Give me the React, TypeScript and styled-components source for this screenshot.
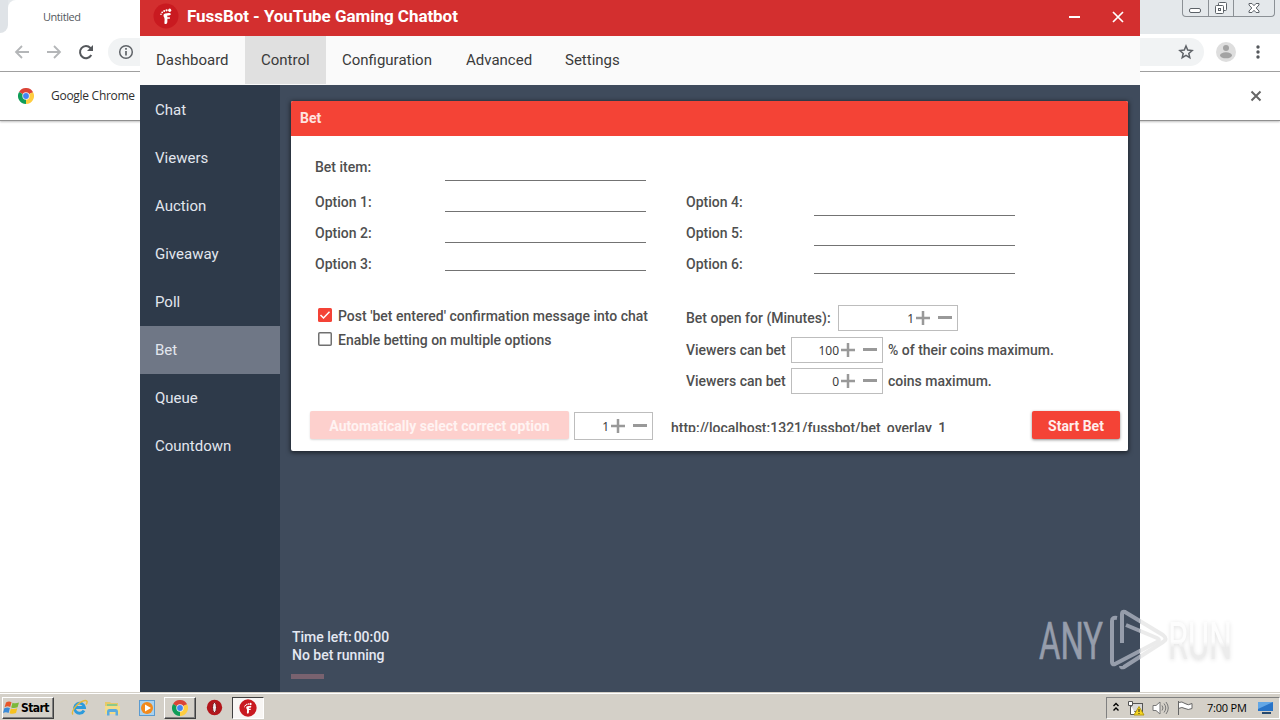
import { ReactNode, useState } from "react"
import styled, { createGlobalStyle, css } from "styled-components"

const GlobalStyle = createGlobalStyle`
  * {
    box-sizing: border-box;
  }
  body {
    margin: 0;
    overflow: hidden;
    background: #fff;
  }
`

const tahoma = `"Open Sans", "Noto Sans", sans-serif`

const Desktop = styled.div`
  position: relative;
  display: flex;
  flex-direction: column;
  width: 1280px;
  height: 720px;
  overflow: hidden;
  font-family: Roboto, sans-serif;
`

/* ---- browser in the background ---- */

const Browser = styled.div`
  flex: 1;
  display: flex;
  flex-direction: column;
  background: #fff;
`

const TabStrip = styled.div`
  height: 34px;
  display: flex;
  justify-content: space-between;
  padding-right: 5px;
  background: #e4e8eb;
`

const StripEdge = styled.div`
  width: 8px;
  background: #fff;
  > div {
    height: 33px;
    background: #dfe3e7;
    border-bottom-right-radius: 8px;
  }
`

const BrowserTab = styled.div`
  flex: 0 0 240px;
  padding: 9px 0 0 35px;
  background: #fff;
  border-top-left-radius: 8px;
  font: 11px/15px ${tahoma};
  letter-spacing: -0.45px;
  color: #55595d;
`

const TabSpacer = styled.div`
  flex: 1;
`

const WindowButtons = styled.div`
  display: flex;
  width: 93px;
  height: 17px;
  border: 1px solid #8b9095;
  border-top: none;
  border-radius: 0 0 4px 4px;
  svg + svg {
    border-left: 1px solid #8b9095;
  }
`

const Toolbar = styled.div`
  height: 38px;
  display: flex;
  align-items: center;
  padding: 0 13px 1px;
  border-bottom: 1px solid #a3a3a3;
`

const NavIcons = styled.div`
  display: flex;
  gap: 14px;
  width: 95px;
`

const AddressBar = styled.div`
  flex: 1;
  display: flex;
  align-items: center;
  justify-content: space-between;
  height: 28px;
  margin-right: 12px;
  padding: 0 9px;
  border-radius: 14px;
  background: #f1f3f4;
`

const BrowserActions = styled.div`
  display: flex;
  align-items: center;
  gap: 13px;
`

const InfoBar = styled.div`
  height: 49px;
  display: flex;
  align-items: center;
  padding: 0 17px 0 18px;
  border-bottom: 1px solid #909090;
  box-shadow: 0 1px 2px rgba(0, 0, 0, 0.25);
  font: 12px/16px ${tahoma};
  letter-spacing: -0.28px;
  color: #303030;
  span {
    flex: 1;
    margin-left: 17px;
  }
`

/* ---- bot window ---- */

const Window = styled.div`
  position: absolute;
  left: 140px;
  top: 0;
  width: 1000px;
  height: 692px;
  display: flex;
  flex-direction: column;
`

const TitleBar = styled.div`
  height: 36px;
  display: flex;
  align-items: center;
  padding: 0 16px 4px 13px;
  background: #d32f2f;
  color: #fff;
`

const Title = styled.div`
  flex: 1;
  margin-left: 8px;
  font-size: 17px;
  font-weight: 700;
  letter-spacing: -0.06px;
`

const MenuBar = styled.div`
  height: 49px;
  display: flex;
  background: #fafafa;
`

const MenuItem = styled.div<{ $active?: boolean; $width: number }>`
  width: ${props => props.$width}px;
  height: 48px;
  line-height: 48px;
  padding-left: 16px;
  font-size: 15px;
  color: #3a3a3a;
  cursor: pointer;
  white-space: nowrap;
  background: ${props => (props.$active ? "#e0e0e0" : "transparent")};
`

const Content = styled.div`
  flex: 1;
  display: flex;
`

const Sidebar = styled.div`
  width: 140px;
  padding-top: 1px;
  background: #2e3a4a;
`

const SideItem = styled.div<{ $active?: boolean }>`
  height: 48px;
  line-height: 48px;
  padding-left: 15px;
  font-size: 15px;
  color: #e2e6ee;
  cursor: pointer;
  background: ${props => (props.$active ? "#6f7786" : "transparent")};
`

const Main = styled.div`
  flex: 1;
  display: flex;
  flex-direction: column;
  justify-content: space-between;
  padding: 16px 12px 13px 11px;
  background: #3f4b5c;
`

const Card = styled.div`
  height: 350px;
  background: #fff;
  border-radius: 2px;
  box-shadow: 0 1px 4px 1px rgba(0, 0, 0, 0.5);
  font-size: 14px;
  font-weight: 500;
  color: #4f4f4f;
`

const CardHeader = styled.div`
  height: 35px;
  line-height: 35px;
  padding-left: 9px;
  border-radius: 2px 2px 0 0;
  background: #f44336;
  font-weight: 700;
  color: #ffe3e0;
`

const Columns = styled.div`
  display: grid;
  grid-template-columns: 371px 1fr;
  padding-left: 24px;
`

const Fields = styled.div`
  height: 144px;
  display: flex;
  flex-direction: column;
  justify-content: flex-end;
`

const FieldRow = styled.label<{ $labelWidth: number; $gap?: number }>`
  display: grid;
  grid-template-columns: ${props => props.$labelWidth}px 201px;
  height: 31px;
  line-height: 31px;
  margin-bottom: ${props => props.$gap || 0}px;
`

const FieldInput = styled.input<{ $height: number }>`
  width: 201px;
  height: ${props => props.$height}px;
  padding: 0;
  border: none;
  border-bottom: 1px solid #737373;
  outline: none;
  background: transparent;
`

const Settings = styled.div<{ $top: number }>`
  height: 114px;
  padding-top: ${props => props.$top}px;
`

const CheckRow = styled.div`
  display: flex;
  gap: 6px;
  height: 24px;
  line-height: 24px;
  padding-left: 3px;
  cursor: pointer;
  svg {
    margin-top: 4px;
  }
`

const SettingRow = styled.div<{ $gap: number }>`
  display: flex;
  height: 26px;
  line-height: 26px;
  margin-bottom: ${props => props.$gap}px;
`

const SettingLabel = styled.div<{ $width: number }>`
  width: ${props => props.$width}px;
  white-space: nowrap;
`

const Suffix = styled.div`
  margin-left: 5px;
`

const SpinnerBox = styled.div<{ $width: number; $height?: number }>`
  display: flex;
  align-items: center;
  justify-content: flex-end;
  width: ${props => props.$width}px;
  height: ${props => props.$height || 26}px;
  padding-right: 4px;
  border: 1px solid #bdbdbd;
  font: 12px/24px "Noto Sans", sans-serif;
  color: #3c3c3c;
  svg {
    cursor: pointer;
  }
  svg + svg {
    margin-left: 6px;
  }
`

const SpinnerValue = styled.span`
  margin: 2px 1px 0 0;
`

const Footer = styled.div`
  display: flex;
  align-items: flex-start;
  padding: 17px 8px 0 19px;
`

const Button = styled.button<{ $width: number }>`
  width: ${props => props.$width}px;
  height: 28px;
  padding: 2px 0 0;
  border: none;
  border-radius: 2px;
  background: #f44336;
  box-shadow: 0 1px 3px rgba(0, 0, 0, 0.45);
  font: 700 14px/26px Roboto, sans-serif;
  color: #ffeeec;
  cursor: pointer;
  ${props => props.disabled && css`
    background: #fdd0cd;
    box-shadow: 0 1px 2px rgba(0, 0, 0, 0.15);
    color: #fff3f2;
  `}
`

const SpinnerSlot = styled.div`
  margin: 1px 18px 0 5px;
`

const OverlayUrl = styled.div`
  flex: 1;
  height: 13px;
  margin-top: 8px;
  line-height: 18px;
  overflow: hidden;
`

const Status = styled.div`
  padding-left: 1px;
  font-size: 14px;
  font-weight: 500;
  line-height: 18px;
  color: #e4e8f2;
`

const TimeLeft = styled.div`
  display: flex;
  gap: 2px;
`

const Progress = styled.div`
  width: 33px;
  height: 5px;
  margin: 10px 0 0 -1px;
  background: #79626f;
`

/* ---- taskbar ---- */

const Taskbar = styled.div`
  height: 28px;
  display: flex;
  align-items: center;
  padding: 2px 0 0;
  border-top: 1px solid #d4d0c8;
  box-shadow: inset 0 1px #fff;
  background: #d4d0c8;
`

const raised = css`
  border: 1px solid;
  border-color: #fff #404040 #404040 #fff;
  box-shadow: inset -1px -1px #808080;
`

const StartButton = styled.div`
  ${raised}
  display: flex;
  align-items: center;
  gap: 1px;
  width: 52px;
  height: 22px;
  margin: 0 9px 0 2px;
  padding-left: 0;
  font: bold 12px/20px "DejaVu Sans Condensed", "DejaVu Sans", sans-serif;
  letter-spacing: -0.6px;
  color: #000;
`

const TaskSlot = styled.div<{ $state?: "open" | "pressed" }>`
  display: flex;
  align-items: center;
  justify-content: center;
  width: 32px;
  height: 22px;
  margin-right: 1.8px;
  ${props => props.$state === "open" && raised}
  ${props => props.$state === "pressed" && css`
    border: 1px solid;
    border-color: #404040 #fff #fff #404040;
    background: #f8f6f4;
  `}
`

const Tray = styled.div`
  display: flex;
  align-items: center;
  width: 174px;
  height: 22px;
  margin-left: auto;
  padding-left: 5px;
  border: 1px solid;
  border-color: #808080 #fff #fff #808080;
  font: 11px/20px ${tahoma};
  color: #000;
  svg {
    flex: none;
  }
`

const TrayIcons = styled.div`
  display: flex;
  align-items: center;
  gap: 7px;
`

const Clock = styled.span`
  width: 50px;
  margin-left: 13px;
  letter-spacing: -0.2px;
  white-space: nowrap;
`

const Watermark = styled.svg`
  position: absolute;
  left: 1030px;
  top: 600px;
  overflow: visible;
  font-family: Roboto, sans-serif;
  font-size: 52px;
`

const WatermarkShade = styled.g`
  filter: drop-shadow(0 1px 2px rgba(0, 0, 0, 0.12));
`

function ChromeLogo({ size }: { size: number }) {
  return (
    <svg width={size} height={size} viewBox="0 0 48 48">
      <path d="M24 24 3.2 12A24 24 0 0 1 44.8 12Z" fill="#db4437" />
      <path d="M24 24 44.8 12A24 24 0 0 1 24 48Z" fill="#ffcd40" />
      <path d="M24 24V48A24 24 0 0 1 3.2 12Z" fill="#0f9d58" />
      <path d="M24 13H44.8V12H24Z" fill="#db4437" />
      <circle cx="24" cy="24" r="11" fill="#f1f1f1" />
      <circle cx="24" cy="24" r="8.7" fill="#4285f4" />
    </svg>
  )
}

function BotLogo({ size }: { size: number }) {
  return (
    <svg width={size} height={size} viewBox="0 0 26 26">
      <circle cx="13" cy="13" r="12.5" fill="#c91a20" />
      <path d="M11.500 20.500c-.3-2 .6-4-.3-6-1.200-1.800-1-3.800 1-4.100 2-.3 5-.9 5.600.3.500 1.300-1 1.700-3.500 1.800v1.700h2.600v1.600h-2.500c-.2 1.600.4 3.500-.6 4.700-.7.700-2.100.8-2.300 0Z" fill="#fff" />
      <ellipse cx="16.700" cy="7.200" rx="1.500" ry="1.800" fill="#fff" />
      <circle cx="13.600" cy="7.300" r="1.100" fill="#fff" />
      <circle cx="11.200" cy="8" r="1" fill="#fff" />
      <circle cx="9.200" cy="9.300" r=".9" fill="#fff" />
      <circle cx="8" cy="11.200" r=".8" fill="#fff" />
    </svg>
  )
}

interface ISpinnerProps {
  initial: number
  width: number
  height?: number
}

function Spinner({ initial, width, height }: ISpinnerProps) {
  const [value, setValue] = useState(initial)

  return (
    <SpinnerBox $width={width} $height={height}>
      <SpinnerValue>{value}</SpinnerValue>
      <svg width="16" height="16" onClick={() => setValue(value + 1)}>
        <path d="M8 1v14M1 8h14" stroke="#999" strokeWidth="2.500" />
      </svg>
      <svg width="16" height="16" onClick={() => setValue(Math.max(0, value - 1))}>
        <path d="M1 7.500h14" stroke="#999" strokeWidth="3" />
      </svg>
    </SpinnerBox>
  )
}

function Check({ initial, children }: { initial: boolean; children: ReactNode }) {
  const [checked, setChecked] = useState(initial)

  return (
    <CheckRow onClick={() => setChecked(!checked)}>
      <svg width="14" height="14">
        {checked ? (
          <>
            <rect width="14" height="14" rx="1.500" fill="#f44336" />
            <path d="M2.500 7 5.500 10 11.500 3.800" fill="none" stroke="#fff" strokeWidth="1.500" />
          </>
        ) : (
          <rect x=".75" y=".75" width="12.500" height="12.500" rx="1" fill="#fff" stroke="#707070" strokeWidth="1.500" />
        )}
      </svg>
      {children}
    </CheckRow>
  )
}

interface IFieldProps {
  label: string
  height: number
  labelWidth?: number
  gap?: number
}

function Field({ label, height, labelWidth = 130, gap }: IFieldProps) {
  return (
    <FieldRow $labelWidth={labelWidth} $gap={gap}>
      {label}
      <FieldInput $height={height} />
    </FieldRow>
  )
}

function BrowserWindow() {
  return (
    <Browser>
      <TabStrip>
        <StripEdge><div /></StripEdge>
        <BrowserTab>Untitled</BrowserTab>
        <TabSpacer />
        <WindowButtons>
          <svg width="25" height="16" fill="none" stroke="#5c6268">
            <rect x="6.500" y="8.500" width="11" height="4" rx="1.500" fill="#fff" />
          </svg>
          <svg width="26" height="16" fill="#fff" stroke="#5c6268">
            <rect x="9.500" y="2.500" width="8" height="8" rx="1" />
            <rect x="6.500" y="5.500" width="8" height="8" rx="1" />
            <rect x="9.500" y="8.500" width="2" height="2" />
          </svg>
          <svg width="41" height="16" fill="#fff" stroke="#5c6268">
            <path d="M15 3.500h3l2 2.200 2-2.200h3v1.500l-2.800 3 2.800 3v1.500h-3l-2-2.200-2 2.200h-3V11l2.800-3-2.800-3Z" />
          </svg>
        </WindowButtons>
      </TabStrip>
      <Toolbar>
        <NavIcons>
          <svg width="18" height="18" fill="none" stroke="#b4b6b8" strokeWidth="1.800">
            <path d="M16 9H3M9 3 3 9l6 6" />
          </svg>
          <svg width="18" height="18" fill="none" stroke="#b4b6b8" strokeWidth="1.800">
            <path d="M2 9h13M9 3l6 6-6 6" />
          </svg>
          <svg width="18" height="18" fill="none" stroke="#55585c" strokeWidth="2">
            <path d="M14.300 12A6 6 0 1 1 13.400 5L15 6.600" />
            <path d="M16 2v6h-6Z" fill="#55585c" stroke="none" />
          </svg>
        </NavIcons>
        <AddressBar>
          <svg width="18" height="18" fill="none" stroke="#5f6368" strokeWidth="1.500">
            <circle cx="9" cy="9" r="6.300" />
            <path d="M9 8v4.500M9 5v1.700" strokeWidth="1.700" />
          </svg>
          <svg width="18" height="18" fill="none" stroke="#5f6368" strokeWidth="1.500">
            <path d="m9 3 1.700 4.100 4.400.4-3.300 2.900 1 4.300L9 12.400l-3.800 2.300 1-4.300L2.900 7.500l4.400-.4Z" />
          </svg>
        </AddressBar>
        <BrowserActions>
          <svg width="20" height="20">
            <circle cx="10" cy="10" r="10" fill="#dedede" />
            <circle cx="10" cy="6" r="3" fill="#a3a3a3" />
            <ellipse cx="10" cy="13.300" rx="6" ry="3" fill="#a3a3a3" />
          </svg>
          <svg width="18" height="18" fill="#55585c">
            <circle cx="9" cy="4" r="1.700" />
            <circle cx="9" cy="9" r="1.700" />
            <circle cx="9" cy="14" r="1.700" />
          </svg>
        </BrowserActions>
      </Toolbar>
      <InfoBar>
        <ChromeLogo size={16} />
        <span>Google Chrome</span>
        <svg width="14" height="14" stroke="#666" strokeWidth="2">
          <path d="m2.500 2.500 9 9M11.500 2.500l-9 9" />
        </svg>
      </InfoBar>
    </Browser>
  )
}

const menu = [
  { label: "Dashboard", width: 105 },
  { label: "Control", width: 81 },
  { label: "Configuration", width: 124 },
  { label: "Advanced", width: 99 },
  { label: "Settings", width: 90 },
]

const sections = ["Chat", "Viewers", "Auction", "Giveaway", "Poll", "Bet", "Queue", "Countdown"]

function BotWindow() {
  const [section, setSection] = useState("Bet")

  return (
    <Window>
      <TitleBar>
        <BotLogo size={26} />
        <Title>FussBot - YouTube Gaming Chatbot</Title>
        <svg width="58" height="14" fill="none" stroke="#fff">
          <path d="M3 8h11" strokeWidth="2" />
          <path d="m47 3 10 10M57 3 47 13" strokeWidth="1.700" />
        </svg>
      </TitleBar>
      <MenuBar>
        {menu.map(item => (
          <MenuItem key={item.label} $width={item.width} $active={item.label === "Control"}>
            {item.label}
          </MenuItem>
        ))}
      </MenuBar>
      <Content>
        <Sidebar>
          {sections.map(name => (
            <SideItem key={name} $active={name === section} onClick={() => setSection(name)}>
              {name}
            </SideItem>
          ))}
        </Sidebar>
        <Main>
          <Card>
            <CardHeader>Bet</CardHeader>
            <Columns>
              <Fields>
                <Field label="Bet item:" height={29} gap={4} />
                <Field label="Option 1:" height={25} />
                <Field label="Option 2:" height={25} />
                <Field label="Option 3:" height={22} />
              </Fields>
              <Fields>
                <Field label="Option 4:" height={29} labelWidth={128} />
                <Field label="Option 5:" height={28} labelWidth={128} />
                <Field label="Option 6:" height={25} labelWidth={128} />
              </Fields>
              <Settings $top={24}>
                <Check initial>Post 'bet entered' confirmation message into chat</Check>
                <Check initial={false}>Enable betting on multiple options</Check>
              </Settings>
              <Settings $top={25}>
                <SettingRow $gap={6}>
                  <SettingLabel $width={152}>Bet open for (Minutes):</SettingLabel>
                  <Spinner initial={1} width={120} />
                </SettingRow>
                <SettingRow $gap={5}>
                  <SettingLabel $width={105}>Viewers can bet</SettingLabel>
                  <Spinner initial={100} width={92} />
                  <Suffix>% of their coins maximum.</Suffix>
                </SettingRow>
                <SettingRow $gap={0}>
                  <SettingLabel $width={105}>Viewers can bet</SettingLabel>
                  <Spinner initial={0} width={92} />
                  <Suffix>coins maximum.</Suffix>
                </SettingRow>
              </Settings>
            </Columns>
            <Footer>
              <Button $width={259} disabled>Automatically select correct option</Button>
              <SpinnerSlot>
                <Spinner initial={1} width={79} height={28} />
              </SpinnerSlot>
              <OverlayUrl>http://localhost:1321/fussbot/bet_overlay_1</OverlayUrl>
              <Button $width={88}>Start Bet</Button>
            </Footer>
          </Card>
          <Status>
            <TimeLeft>
              <span>Time left:</span>
              <span>00:00</span>
            </TimeLeft>
            <div>No bet running</div>
            <Progress />
          </Status>
        </Main>
      </Content>
    </Window>
  )
}

function WindowsTaskbar() {
  return (
    <Taskbar>
      <StartButton>
        <svg width="17" height="16">
          <path d="M3 2.500Q6 .5 8.500 2.300L7.200 7Q4.500 5.600 1.600 7.200Z" fill="#e8562a" />
          <path d="M9.500 2.800Q12.500 4 16 2.500L14.600 7.200Q11 8.700 8.200 7.400Z" fill="#7cb83a" />
          <path d="M1.300 8.300Q4.300 6.800 6.900 8.100L5.600 13Q3 11.500 0 13Z" fill="#3a8ad8" />
          <path d="M7.900 8.500Q11 9.700 14.300 8.300L13 13Q9.500 14.500 6.600 13.300Z" fill="#f7c21f" />
        </svg>
        Start
      </StartButton>
      <TaskSlot>
        <svg width="17" height="17" fill="none">
          <path d="M13 11.500A5 5 0 1 1 13.500 8.500H5" stroke="#2c9bdc" strokeWidth="2.800" />
          <path d="M2 15.500C-.5 13 6 3.500 13 1.700 17 .8 16.500 3.500 15 5.500" stroke="#e5b93a" strokeWidth="1.400" />
        </svg>
      </TaskSlot>
      <TaskSlot>
        <svg width="17" height="16">
          <path d="M1 2h5l1 1h7v10H1Z" fill="#e6c968" />
          <path d="M3 4h10v4H3Z" fill="#8dc98a" />
          <path d="M1 6h15v8H1Z" fill="#f3dc8a" />
          <path d="M3 15.500v-4q0-2.500 2-2.500h7q2 0 2 2.500v4h-2.500v-3.500h-6v3.500Z" fill="#5aaade" />
        </svg>
      </TaskSlot>
      <TaskSlot>
        <svg width="16" height="16">
          <rect x=".5" y=".5" width="15" height="15" fill="#a9d2ef" stroke="#5b9bd0" />
          <circle cx="8" cy="8" r="6" fill="#f28a1c" />
          <path d="m6 4.500 6 3.500-6 3.500Z" fill="#fff" />
        </svg>
      </TaskSlot>
      <TaskSlot $state="open"><ChromeLogo size={16} /></TaskSlot>
      <TaskSlot>
        <svg width="17" height="17">
          <circle cx="8.500" cy="8.500" r="7.700" fill="#b3161b" />
          <ellipse cx="8.500" cy="8.500" rx="2" ry="5" fill="#eee" stroke="#7d0b10" />
        </svg>
      </TaskSlot>
      <TaskSlot $state="pressed"><BotLogo size={18} /></TaskSlot>
      <Tray>
        <TrayIcons>
          <svg width="8" height="14" fill="none" stroke="#000" strokeWidth="1.400">
            <path d="M1.500 5 4 2.500 6.500 5M1.500 9.500 4 7l2.500 2.500" />
          </svg>
          <svg width="18" height="16">
            <rect x="4.500" y="3.500" width="11" height="8" fill="#d9d9d9" stroke="#555" />
            <path d="M1.500 1.500h4v4h-4ZM3.500 5v9.500H9" fill="#fff" stroke="#555" />
            <path d="M12 6.500 17 15H7Z" fill="#f6d51f" stroke="#b69a14" />
            <path d="M12 9v3M12 13v1" stroke="#222" />
          </svg>
          <svg width="17" height="16" fill="none" stroke="#777">
            <path d="M1 5.500h3L8 2v12L4 10.500H1Z" fill="#fff" />
            <path d="M10 5.500q2 2.500 0 5M12 3.500q3.500 4.500 0 9M14 2q4.500 6 0 12" />
          </svg>
          <svg width="18" height="16" fill="#fff" stroke="#666">
            <path d="M2.500 1v14M2.500 2.500Q6 1 9 3.500t7 0v5q-4 2-7 0t-6.500 0Z" />
          </svg>
        </TrayIcons>
        <Clock>7:00 PM</Clock>
        <svg width="17" height="15">
          <path d="M1 2h15v9H1Z" fill="#2874c8" />
          <path d="M1 2h15L1 9Z" fill="#63a7e6" />
          <path d="M5 12h9v2H5Z" fill="#26496e" />
        </svg>
      </Tray>
    </Taskbar>
  )
}

function App() {
  return (
    <>
      <GlobalStyle />
      <Desktop>
        <BrowserWindow />
        <BotWindow />
        <WindowsTaskbar />
        <Watermark width="220" height="80">
          <defs>
            <linearGradient id="fade" x1="0" y1="0" x2="0" y2="1">
              <stop offset="0.500" stopColor="#fdfdfd" />
              <stop offset="0.600" stopColor="#ececec" />
            </linearGradient>
            <linearGradient id="split" gradientUnits="userSpaceOnUse" x1="109" y1="0" x2="111" y2="0">
              <stop offset="0" stopColor="#969dab" />
              <stop offset="1" stopColor="#ebebeb" />
            </linearGradient>
          </defs>
          <text
            x="9"
            y="59"
            textLength="64"
            lengthAdjust="spacingAndGlyphs"
            fill="#969dab"
            stroke="#969dab"
            strokeWidth="0.600"
          >
            ANY
          </text>
          <g fill="none" stroke="url(#split)" strokeWidth="4" strokeLinejoin="round">
            <path d="M87 18q-5-1-5 3v41q0 3 3 2l42-22q4-2 0-4L96 25" />
            <path d="M92 43V14q0-3 3-2l38 23q5 4 0 7L94 67q-3 1-3-1" />
          </g>
          <WatermarkShade>
            <text
              x="138"
              y="59"
              textLength="64"
              lengthAdjust="spacingAndGlyphs"
              fill="url(#fade)"
            >
              RUN
            </text>
          </WatermarkShade>
        </Watermark>
      </Desktop>
    </>
  )
}

export default App
